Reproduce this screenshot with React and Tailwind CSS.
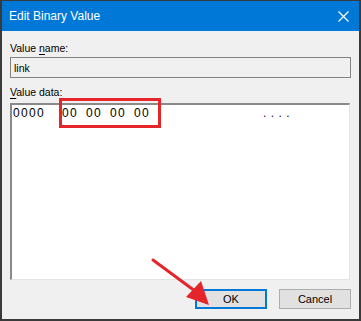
export default function App() {
  return (
    <div className="w-[361px] h-[321px] bg-[#f0f0f0] border-x-2 border-b-2 border-t border-[#3a3a3a] flex flex-col relative font-['Liberation_Sans',Arial,sans-serif] text-black">
      {/* title bar */}
      <div className="h-[30px] bg-[#0078d7] flex items-center justify-between pl-[7px] pr-[10px] shrink-0">
        <span className="text-white text-[12px]">Edit Binary Value</span>
        <svg width="11" height="11" viewBox="0 0 11 11" className="block">
          <path d="M0.5 0.5 L10.5 10.5 M10.5 0.5 L0.5 10.5" stroke="#fff" strokeWidth="1.2" />
        </svg>
      </div>

      {/* body */}
      <div className="flex-1 flex flex-col px-[8px] pt-[10px] pb-[10px] text-[10.5px] leading-[14px]">
        <div>
          Value <span className="underline underline-offset-2">n</span>ame:
        </div>
        <div className="mt-[2px] h-[21px] border border-[#838383] bg-[#f0f0f0] flex items-center pl-[3px]">
          link
        </div>

        <div className="mt-[7px]">
          <span className="underline underline-offset-2">V</span>alue data:
        </div>
        <div className="mt-[4px] h-[177px] mr-[1px] bg-white border-t-2 border-l-2 border-t-[#8a8a8a] border-l-[#8a8a8a] border-r border-b border-r-[#e3e3e3] border-b-[#e3e3e3] pl-[1px] pt-[1px]">
          <div className="flex text-[12px] leading-[14px] tracking-[1.33px] whitespace-pre">
            <span className="w-[32px]">0000</span>
            <span className="ml-[17px] w-[16px]">00</span>
            <span className="ml-[8px] w-[16px]">00</span>
            <span className="ml-[8px] w-[16px]">00</span>
            <span className="ml-[8px] w-[16px]">00</span>
            <span className="ml-[113px] tracking-[4.4px] text-[#111]">....</span>
          </div>
        </div>

        <div className="mt-[9px] flex justify-end gap-[12px] text-[11px]">
          <button className="w-[72px] h-[20px] border-2 border-[#0078d7] bg-[#e1e1e1] flex items-center justify-center">
            OK
          </button>
          <button className="w-[72px] h-[20px] border border-[#adadad] bg-[#e1e1e1] flex items-center justify-center">
            Cancel
          </button>
        </div>
      </div>

      {/* annotation: red highlight box */}
      <div className="absolute left-[57px] top-[97px] w-[102px] h-[30px] border-[3px] border-[#e4262b] pointer-events-none" />

      {/* annotation: red arrow */}
      <svg className="absolute left-0 top-0 pointer-events-none" width="361" height="321" viewBox="0 0 361 321">
        <line x1="151" y1="259" x2="193" y2="290" stroke="#e4262b" strokeWidth="3" strokeLinecap="round" />
        <polygon points="207,304 184,296 199,280" fill="#e4262b" />
      </svg>
    </div>
  );
}
